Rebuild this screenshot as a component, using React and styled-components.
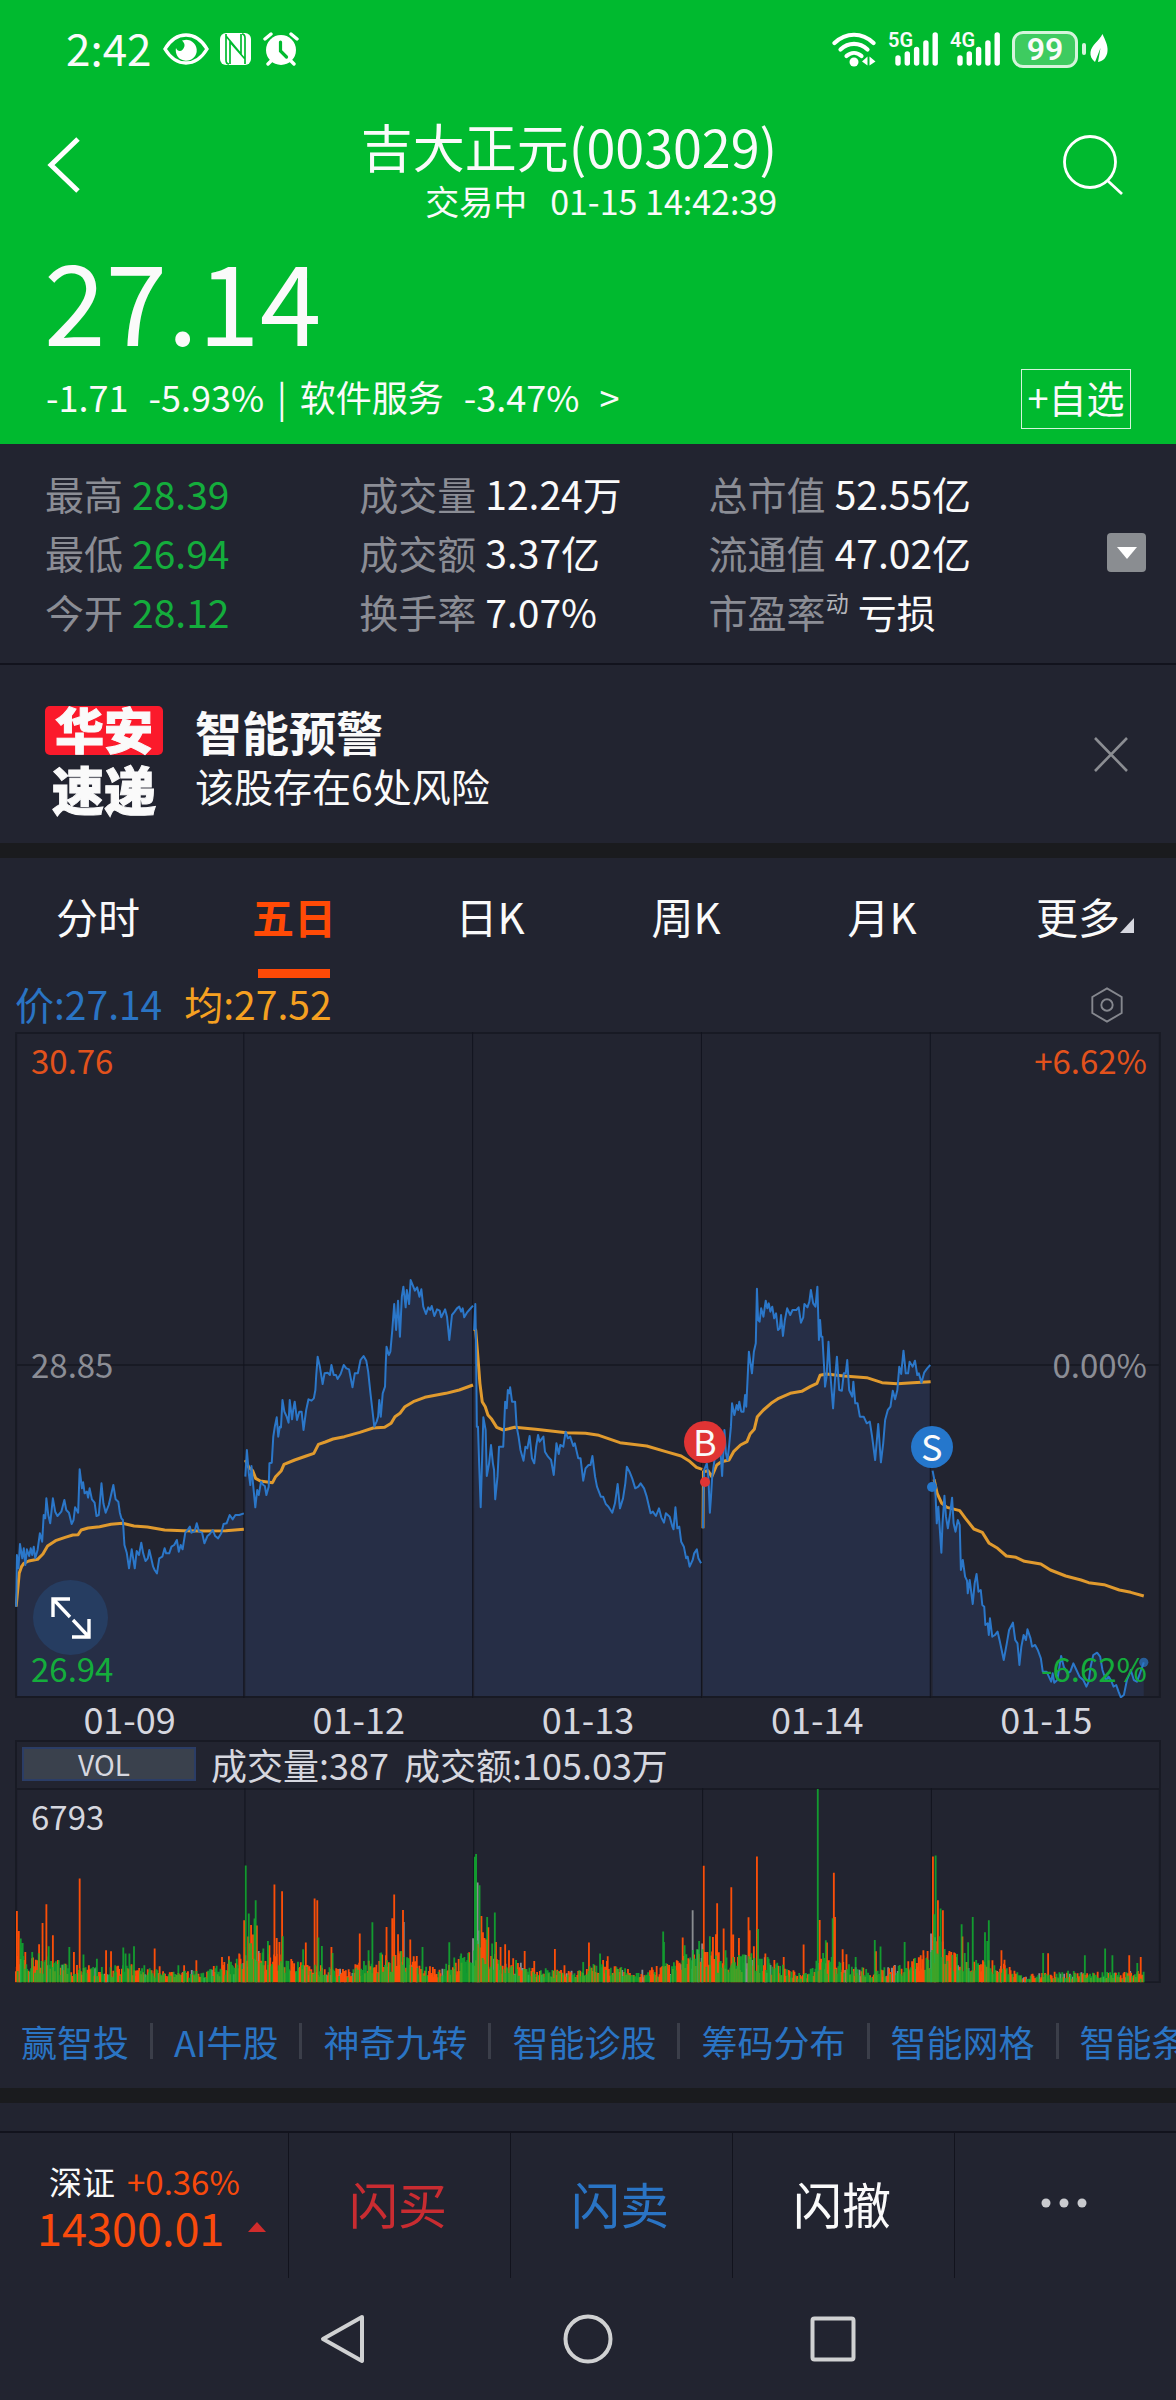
import React from "react";
import styled, { createGlobalStyle } from "styled-components";

const color = {
  green: "#00ba2f",
  panel: "#222430",
  band: "#1a1b1e",
  line: "#12131d",
  grid: "#181a24",
  up: "#f84a0c",
  down: "#14ad3c",
  blue: "#2a74c4",
  orange: "#f5a021",
  muted: "#8b8d95",
  text: "#fafafa",
  soft: "#d6d7df",
};

const GlobalStyle = createGlobalStyle`
  *, *::before, *::after { box-sizing: border-box; }
  body {
    margin: 0;
    background: ${color.panel};
    color: ${color.text};
    font-family: "Noto Sans CJK SC", "Noto Sans", sans-serif;
    font-size: 39px;
  }
  button {
    margin: 0;
    padding: 0;
    border: 0;
    background: none;
    color: inherit;
    font: inherit;
    cursor: pointer;
  }
  a { color: inherit; text-decoration: none; }
  p, h1, h2, dl, dd { margin: 0; font-weight: 400; }
  svg { display: block; }
`;

const Page = styled.div`
  display: flex;
  flex-direction: column;
  overflow: hidden;
`;

/* ---------- header ---------- */

const Hero = styled.header`
  background: ${color.green};
  padding-bottom: 15px;
`;

const StatusBar = styled.div`
  display: flex;
  justify-content: space-between;
  align-items: center;
  height: 98px;
  padding: 0 68px 0 66px;
`;

const StatusGroup = styled.div`
  display: flex;
  align-items: center;
  gap: ${(p) => p.$gap}px;
`;

const Clock = styled.span`
  font-size: 44px;
  line-height: 48px;
  padding-bottom: 4px;
`;

const Signal = styled.span`
  position: relative;
  width: 50px;
`;

const SignalName = styled.span`
  position: absolute;
  left: 0;
  top: -2px;
  font: 600 20px/20px Roboto, sans-serif;
`;

const BatteryWrap = styled.span`
  display: flex;
  align-items: center;
  gap: 4px;
`;

const Battery = styled.span`
  width: 66px;
  height: 37px;
  border: 3px solid #d5f4dc;
  border-radius: 11px;
  background: #3ecb60;
  text-align: center;
  font: 600 32px/31px Roboto, sans-serif;
`;

const BatteryTip = styled.span`
  width: 4px;
  height: 12px;
  border-radius: 2px;
  background: #d5f4dc;
`;

const TitleBar = styled.div`
  display: grid;
  grid-template-columns: 100px 1fr 138px;
  align-items: center;
  padding-top: 12px;
`;

const TitleBlock = styled.div`
  justify-self: center;
  text-align: right;
`;

const Title = styled.h1`
  font-size: 52px;
  line-height: 72px;
`;

const Subtitle = styled.p`
  font-size: 34px;
  line-height: 38px;
  white-space: pre;
`;

const IconButton = styled.button`
  display: flex;
  justify-content: ${(p) => p.$justify || "center"};
  padding: ${(p) => p.$pad || "0"};
`;

const Price = styled.p`
  margin-top: 18px;
  padding-left: 44px;
  font-size: 111px;
  line-height: 120px;
`;

const ChangeRow = styled.div`
  display: flex;
  justify-content: space-between;
  align-items: center;
  margin-top: 11px;
  padding: 0 45px 0 46px;
`;

const Change = styled.p`
  display: flex;
  gap: 20px;
  padding-bottom: 6px;
  font-size: 36px;
  line-height: 52px;
`;

const Pipe = styled.span`
  margin: 0 -7px;
`;

const AddButton = styled.button`
  width: 110px;
  height: 60px;
  border: 1px solid #d5f4dc;
  padding-bottom: 4px;
  font-size: 38px;
  line-height: 54px;
  white-space: nowrap;
`;

/* ---------- key figures ---------- */

const Stats = styled.section`
  display: flex;
  align-items: center;
  padding: 20px 30px 22px 45px;
`;

const StatGrid = styled.dl`
  flex: 1;
  display: grid;
  grid-template-columns: 314fr 349fr 398fr;
`;

const Stat = styled.div`
  display: flex;
  gap: 9px;
  line-height: 59px;
  white-space: nowrap;
`;

const StatName = styled.dt`
  color: ${color.muted};
`;

const StatValue = styled.dd`
  color: ${(p) => (p.$down ? color.down : color.text)};
`;

const Mark = styled.sup`
  font-size: 23px;
  line-height: 23px;
  vertical-align: 16px;
  color: #b4b5ba;
`;

const MoreToggle = styled.button`
  width: 39px;
  height: 39px;
  border-radius: 4px;
  background: #8a8d91;
  display: grid;
  place-items: center;
`;

/* ---------- alert ---------- */

const Alert = styled.section`
  display: flex;
  align-items: center;
  height: 180px;
  border-top: 2px solid ${color.line};
  padding: 8px 48px 0 45px;
`;

const Brand = styled.div`
  width: 118px;
  display: flex;
  flex-direction: column;
  gap: 13px;
  text-align: center;
  font-weight: 900;
  font-size: 52px;
  line-height: 42px;
  -webkit-text-stroke: 1px #fafafa;
`;

const BrandTop = styled.span`
  height: 49px;
  border-radius: 5px;
  background: #fb1a2b;
  font-size: 49px;
  line-height: 43px;
`;

const AlertText = styled.div`
  flex: 1;
  padding-left: 32px;
  line-height: 54px;
`;

const AlertTitle = styled.h2`
  font-size: 47px;
  font-weight: 700;
`;

const Band = styled.div`
  height: 15px;
  background: ${color.band};
`;

/* ---------- tabs ---------- */

const Tabs = styled.nav`
  display: grid;
  grid-template-columns: repeat(6, 1fr);
`;

const Tab = styled.button`
  display: flex;
  flex-direction: column;
  align-items: center;
  height: 120px;
  padding-top: 28px;
  font-size: 42px;
  line-height: 60px;
  font-weight: ${(p) => (p.$active ? 700 : 400)};
  color: ${(p) => (p.$active ? "#ff4a06" : color.text)};

  &::after {
    content: "";
    width: 72px;
    height: 9px;
    margin-top: 23px;
    background: ${(p) => (p.$active ? "#ff4a06" : "transparent")};
  }
`;

const TabLabel = styled.span`
  position: relative;
`;

const Corner = styled.span`
  position: absolute;
  left: 100%;
  bottom: 13px;
`;

/* ---------- charts ---------- */

const Legend = styled.div`
  display: flex;
  align-items: center;
  gap: 22px;
  height: 54px;
  padding: 0 52px 0 15px;
`;

const LegendItem = styled.span`
  color: ${(p) => p.$color};
  line-height: 50px;
  padding-bottom: 4px;
`;

const Push = styled.span`
  flex: 1;
`;

const Charts = styled.section`
  margin: 0 15px;
`;

const Plot = styled.div`
  position: relative;
  height: ${(p) => p.$height}px;

  > svg { width: 100%; height: 100%; }
`;

const AxisLabel = styled.span`
  position: absolute;
  ${(p) => p.$side || "left"}: ${(p) => (p.$side === "right" ? 14 : 16)}px;
  ${(p) => p.$place};
  font-size: 33px;
  line-height: 48px;
  color: ${(p) => p.$color};
`;

const ExpandButton = styled.button`
  position: absolute;
  left: 18px;
  bottom: 43px;
  width: 75px;
  height: 75px;
  border-radius: 50%;
  background: #263d61;
  display: grid;
  place-items: center;
`;

const Pin = styled.span`
  position: absolute;
  left: ${(p) => p.$left};
  top: ${(p) => p.$top}px;
  width: 42px;
  height: 42px;
  margin-left: -21px;
  border-radius: 50%;
  background: ${(p) => p.$color};
  text-align: center;
  font-size: 36px;
  line-height: 38px;

  &::after {
    content: "";
    position: absolute;
    left: 16px;
    top: 56px;
    width: 10px;
    height: 10px;
    border-radius: 50%;
    background: ${(p) => p.$color};
  }
`;

const Dates = styled.div`
  display: grid;
  grid-template-columns: repeat(5, 1fr);
  height: 42px;
  text-align: center;
  font-size: 36px;
  line-height: 40px;
  color: ${color.soft};
`;

const VolumeBar = styled.div`
  display: flex;
  align-items: center;
  gap: 15px;
  height: 48px;
  border: 2px solid ${color.grid};
  border-bottom: 0;
  padding: 0 0 3px 5px;
  font-size: 36px;
  line-height: 40px;
  color: ${color.soft};
`;

const IndicatorButton = styled.button`
  width: 174px;
  height: 34px;
  border: 2px solid #2b3d66;
  background: #3a414d;
  padding-right: 10px;
  font-size: 28px;
  line-height: 28px;
`;

/* ---------- shortcuts and bottom bars ---------- */

const Shortcuts = styled.nav`
  display: flex;
  align-items: center;
  height: 105px;
  padding: 15px 0 0 21px;
  white-space: nowrap;
  overflow: hidden;
`;

const Shortcut = styled.a`
  flex: none;
  display: flex;
  align-items: center;
  font-size: 36px;
  line-height: 54px;
  padding-bottom: 4px;
  color: ${color.blue};

  & + &::before {
    content: "";
    width: 3px;
    height: 36px;
    margin: 0 21px;
    background: #3b3e49;
  }
`;

const TradeBar = styled.footer`
  display: grid;
  grid-template-columns: 288fr 222fr 222fr 222fr 222fr;
  height: 147px;
  margin-top: 28px;
  border-top: 2px solid ${color.line};
`;

const TradeCell = styled.button`
  display: flex;
  align-items: center;
  justify-content: center;
  border-left: 1px solid ${color.line};
  padding: 0 3px 5px 0;
  font-size: 49px;
  line-height: 60px;
  color: ${(p) => p.$color || color.text};
`;

const IndexCell = styled.div`
  padding: 25px 0 0 37px;
  color: ${color.up};
`;

const IndexTop = styled.div`
  display: flex;
  gap: 12px;
  padding-left: 12px;
  font-size: 33px;
  line-height: 46px;
`;

const IndexName = styled.span`
  color: ${color.text};
`;

const IndexValue = styled.div`
  display: flex;
  align-items: center;
  gap: 24px;
  font-size: 45px;
  line-height: 46px;
`;

const SystemNav = styled.nav`
  display: grid;
  grid-template-columns: 1fr 245px 245px 245px 1fr;
  align-items: center;
  height: 122px;

  > :first-child { grid-column: 2; }
`;

/* ---------- chart data ---------- */

const HALF = 1505;

const days = [
  {
    x: 0,
    price:
      "42,1130 44,975 48,1015 52,942 58,985 62,955 66,1005 70,958 76,978 80,955 84,975 88,950 92,985 98,960 104,910 110,935 114,855 118,865 121,805 126,855 131,880 138,805 144,845 150,858 160,845 168,810 173,840 180,848 187,882 192,870 196,832 204,848 208,718 214,775 217,757 221,790 227,785 230,803 234,775 240,808 247,818 252,858 258,855 265,760 270,820 276,848 284,825 290,795 296,765 302,808 309,815 313,848 317,865 321,870 325,945 331,968 337,1015 344,958 352,1015 357,963 363,975 369,938 374,970 380,993 386,985 390,960 395,985 400,1010 404,1020 410,1030 416,985 424,980 430,955 434,970 442,970 448,950 455,945 462,930 467,965 472,945 477,958 484,908 490,900 496,890 500,908 508,905 514,880 520,905 528,908 534,940 542,918 548,912 556,900 562,918 570,925 578,910 584,882 592,880 600,855 608,868 615,855 625,855 637,850",
    average:
      "42,1130 46,1080 50,1030 56,1010 62,1000 75,993 98,988 112,972 124,948 145,932 170,922 190,915 204,914 212,900 230,894 260,890 290,883 320,880 350,888 385,891 430,900 480,902 530,903 590,902 637,898",
  },
  {
    x: 0,
    price:
      "641,740 645,660 650,730 654,765 657,708 661,760 667,832 672,780 676,795 682,755 688,765 692,768 696,795 702,770 704,700 710,698 714,620 718,590 723,562 727,620 731,590 734,592 738,510 743,545 749,560 754,578 757,510 763,568 766,540 770,515 776,570 782,545 788,545 793,600 800,540 806,508 814,512 820,505 824,480 826,440 830,380 836,412 843,462 848,430 856,428 862,435 866,405 872,435 878,435 882,447 890,432 898,405 905,415 912,418 921,472 927,430 935,430 942,390 950,378 957,392 962,425 968,490 973,540 978,590 984,575 988,560 991,510 995,560 1000,490 1006,470 1008,400 1010,350 1016,375 1020,365 1025,300 1030,222 1035,300 1040,212 1045,320 1050,200 1054,170 1060,232 1063,180 1069,222 1073,150 1080,170 1084,182 1090,172 1096,200 1101,178 1106,230 1113,252 1119,232 1124,240 1128,228 1135,258 1142,238 1149,242 1153,262 1163,238 1168,260 1174,330 1181,255 1188,245 1194,235 1200,230 1205,245 1209,235 1213,262 1220,248 1226,240 1236,227",
    average:
      "641,690 650,712 660,722 668,745 680,753 712,758 720,740 735,722 742,703 770,690 800,678 820,670 832,643 850,636 870,627 900,620 940,607 975,594 1005,592 1022,580 1032,560 1045,550 1058,530 1080,515 1110,502 1165,490 1200,480 1236,465",
  },
  {
    x: 0,
    price:
      "1239,300 1242,222 1244,350 1246,590 1249,590 1252,700 1256,832 1263,562 1269,600 1272,738 1278,700 1283,645 1288,700 1291,720 1294,808 1300,740 1304,650 1315,650 1320,515 1324,535 1327,480 1331,490 1333,472 1338,515 1346,515 1350,590 1355,620 1360,660 1368,692 1373,650 1378,655 1384,618 1390,685 1396,700 1401,650 1406,615 1410,635 1420,620 1424,665 1432,680 1440,690 1447,735 1454,640 1460,672 1464,645 1472,650 1478,605 1484,625 1490,620 1498,648 1502,640 1511,685 1517,685 1524,752 1530,715 1538,705 1543,705 1548,678 1555,740 1560,770 1570,800 1576,800 1583,822 1590,830 1600,848 1607,820 1614,762 1620,835 1628,805 1634,760 1638,710 1645,725 1652,745 1660,775 1668,770 1674,760 1683,775 1690,800 1700,850 1706,845 1714,858 1722,835 1728,862 1735,878 1740,850 1750,860 1757,890 1760,898 1765,832 1770,895 1775,890 1780,935 1787,950 1793,985 1797,980 1802,1010 1810,990 1814,970 1821,958 1825,985 1832,1000",
    average:
      "1238,298 1243,300 1248,370 1254,460 1260,515 1268,530 1275,555 1285,568 1298,592 1315,600 1345,592 1400,598 1480,608 1530,610 1565,616 1620,638 1690,648 1740,665 1780,678 1800,692 1820,712 1835,718",
  },
  {
    x: HALF,
    price:
      "332,895 333,790 335,720 342,700 346,740 350,848 353,800 356,740 362,690 376,640 380,700 382,738 388,600 392,670 396,690 400,650 405,590 408,520 414,555 420,525 424,540 427,515 432,545 438,545 442,495 445,530 448,460 452,365 460,430 465,365 470,340 473,176 476,270 480,275 484,235 490,260 496,212 500,235 504,220 508,245 513,230 518,265 523,250 528,300 533,295 536,255 541,318 546,270 552,235 560,255 566,240 576,240 582,232 588,278 594,262 597,222 605,232 610,215 614,180 620,220 626,230 631,170 635,330 638,270 641,320 644,320 648,400 651,470 655,440 660,335 664,420 672,535 677,450 682,380 688,480 695,482 700,430 705,430 709,390 714,480 722,500 725,455 730,520 736,520 742,560 752,560 760,580 768,575 774,620 782,690 790,582 797,697 803,640 808,570 815,540 822,530 828,482 834,508 840,480 845,410 850,432 856,362 862,430 868,430 872,395 880,410 886,392 892,435 896,430 903,458 910,428 918,415 926,405",
    average:
      "332,895 333,725 345,722 355,740 368,705 380,695 400,690 412,665 430,645 447,635 455,612 466,598 474,560 490,540 510,520 530,505 560,490 590,484 612,470 630,460 638,436 655,432 700,438 760,443 800,458 840,461 880,458 927,455",
  },
  {
    x: HALF,
    price:
      "932,722 936,745 940,800 943,880 947,830 955,968 958,880 963,797 967,860 972,895 978,850 983,803 987,880 992,905 998,870 1003,885 1006,1020 1011,990 1017,1040 1022,1052 1024,1090 1029,1050 1037,1122 1042,1060 1047,1032 1052,1085 1058,1080 1062,1125 1067,1130 1070,1185 1076,1180 1079,1215 1082,1165 1088,1220 1095,1215 1102,1205 1108,1235 1118,1290 1126,1240 1132,1200 1142,1178 1148,1230 1154,1240 1159,1305 1164,1250 1170,1215 1176,1230 1180,1198 1188,1225 1192,1250 1200,1245 1207,1260 1215,1285 1220,1325 1230,1325 1236,1340 1242,1355 1246,1330 1250,1358 1258,1350 1268,1278 1275,1310 1284,1330 1292,1325 1300,1300 1308,1320 1316,1340 1326,1350 1334,1370 1340,1355 1345,1310 1352,1275 1362,1268 1370,1280 1376,1320 1385,1350 1392,1340 1398,1350 1405,1370 1412,1365 1418,1385 1424,1402 1432,1395 1440,1350 1450,1320 1458,1350 1466,1355 1474,1330 1484,1297",
    average:
      "936,748 944,790 956,820 970,832 1003,842 1018,865 1040,897 1062,907 1080,940 1102,955 1125,978 1150,982 1172,994 1215,1002 1240,1020 1280,1038 1320,1050 1340,1058 1380,1064 1420,1080 1450,1087 1484,1098",
  },
];

const dayLines = [637, 1235, 1833, 2431];

/* Peaks of traded volume: position, top of the bar, direction. */
const peaksEarly =
  "44,662r 49,722r 54,745g 59,758g 66,785r 84,785g 102,762r 111,698r 121,642r 127,768g 138,735r 168,820g 181,770g 193,785r 208,565r 218,793g 232,825r 253,805g 277,780r 290,783r 322,772g 328,790g 338,790g 350,768g 377,825g 404,775r 417,828r 466,825g 481,825r 513,810r 580,800r 598,798r 625,790r 638,690r 642,526g 650,670g 656,704r 661,733r 665,685g 668,630g 671,706r 700,752g 704,765r 717,583r 723,743r 730,755r 737,603r 739,738g 688,775g 792,777g 799,757r 822,625r 829,630r 832,742g 841,767g 866,770r 869,788g 940,730r 963,780g 973,696g 1010,710r 1025,684r 1030,613r 1040,732r 1053,659r 1055,695n 1072,748r 1104,770g 1089,797r 1174,756g 1187,802g 1205,790g 1236,744n 1241,500g 1244,492g 1248,577n 1253,585g 1258,677r 1262,726r 1273,680g 1276,711r 1293,667g 1296,755r 1308,770r 1320,762r 1330,780r 1371,782r 1396,812r 1450,776r 1475,825r 1524,815g 1539,757r";
const peaksLate =
  "63,790g 83,798r 228,724g 230,755g 279,742r 284,765g 305,660n 322,752g 334,527r 330,760n 350,738g 358,740r 366,732r 369,639r 386,715r 391,780g 406,591r 411,733r 426,743r 451,681r 454,720r 473,499r 476,716g 465,768r 495,790r 543,800r 595,763r 632,297g 637,689r 653,750g 656,757r 671,684g 674,548r 677,680r 697,777r 707,792r 731,800g 781,749g 784,783r 796,769g 859,755g 908,780r 919,782r 928,730n 933,499r 940,496g 946,630r 953,655g 959,660r 936,672g 950,738g 975,788r 1008,702g 1010,739r 1016,788g 1025,756g 1037,680g 1069,726g 1075,752g 1079,690g 1112,780r 1120,808r 1221,788g 1234,789r 1330,795g 1383,775g 1402,795g 1446,795r 1467,818g 1476,800r";

const parsePeaks = (text, offset) =>
  text.split(" ").map((item) => {
    const [x, rest] = item.split(",");
    return { x: Number(x) + offset, y: parseInt(rest, 10), kind: rest.slice(-1) };
  });

/* Usual activity through the session: position, typical bar height. */
const activity = [
  [40, 95], [150, 60], [230, 40], [340, 48], [440, 28], [540, 35], [630, 75],
  [650, 130], [700, 85], [800, 50], [900, 35], [1000, 80], [1060, 85], [1140, 35],
  [1225, 80], [1250, 140], [1310, 75], [1400, 42], [1500, 30], [1580, 60], [1660, 28],
  [1740, 50], [1830, 95], [1900, 75], [1980, 80], [2030, 55], [2100, 20], [2150, 80],
  [2210, 50], [2300, 38], [2420, 75], [2440, 130], [2520, 65], [2620, 55], [2670, 20],
  [2760, 32], [2850, 28], [2990, 30],
];

const levelAt = (x) => {
  const i = activity.findIndex(([ax]) => ax > x);
  if (i <= 0) return activity[i === 0 ? 0 : activity.length - 1][1];
  const [x0, a] = activity[i - 1];
  const [x1, b] = activity[i];
  return a + ((b - a) * (x - x0)) / (x1 - x0);
};

const buildVolume = () => {
  let seed = 77;
  const random = () => {
    seed = (seed * 16807) % 2147483647;
    return seed / 2147483647;
  };
  const bars = [];
  for (let x = 41; x < 2990; x += 2.5) {
    const level = levelAt(x);
    const r = random();
    const k = random();
    bars.push({
      x,
      y: 876 - level * (0.35 + 0.8 * r),
      kind: k < 0.46 ? "r" : k < 0.92 ? "g" : "n",
    });
  }
  return bars.concat(parsePeaks(peaksEarly, 0), parsePeaks(peaksLate, HALF));
};

const volume = buildVolume();
const barColor = { r: "#fb4e08", g: "#0fb92f", n: "#8a8d91" };
const barPath = (kind) =>
  volume
    .filter((bar) => bar.kind === kind)
    .map((bar) => `M${bar.x - 2.4} 876V${Math.round(bar.y)}h4.8V876z`)
    .join("");

const PriceChart = () => (
  <svg viewBox="39 -594 2995 1998" preserveAspectRatio="none" role="img" aria-label="五日走势">
    {days.map((day, i) => {
      const points = day.price.split(" ");
      const first = points[0].split(",")[0];
      const last = points[points.length - 1].split(",")[0];
      return (
        <polygon
          key={i}
          transform={`translate(${day.x} 0)`}
          points={`${first},1402 ${day.price} ${last},1402`}
          fill="#262e46"
        />
      );
    })}
    <g stroke={color.grid} strokeWidth="2" fill="none">
      <path vectorEffect="non-scaling-stroke" d="M39 405H3034M42 -591H3031V1401H42z" />
      {dayLines.map((x) => (
        <path key={x} vectorEffect="non-scaling-stroke" d={`M${x} -594V1404`} strokeWidth="1" stroke="#12141e" />
      ))}
    </g>
    {days.map((day, i) => (
      <g key={i} transform={`translate(${day.x} 0)`} fill="none" strokeLinejoin="round">
        <polyline vectorEffect="non-scaling-stroke" points={day.average} stroke="#e09a2e" strokeWidth="3" />
        <polyline vectorEffect="non-scaling-stroke" points={day.price} stroke="#2b77c9" strokeWidth="2" />
      </g>
    ))}
    <ellipse cx="2989" cy="1297" rx="12" ry="14" fill="#2b77c9" opacity="0.7" />
  </svg>
);

const VolumeChart = () => (
  <svg viewBox="39 294 2995 584" preserveAspectRatio="none" role="img" aria-label="成交量">
    <path
      d="M42 297H3031V876H42z"
      fill="none"
      stroke={color.grid}
      strokeWidth="2"
      vectorEffect="non-scaling-stroke"
    />
    {dayLines.map((x) => (
      <path key={x} vectorEffect="non-scaling-stroke" d={`M${x + 3} 294V876`} stroke="#12141e" />
    ))}
    <path d={barPath("n")} fill={barColor.n} />
    <path d={barPath("r")} fill={barColor.r} />
    <path d={barPath("g")} fill={barColor.g} opacity="0.8" />
  </svg>
);

/* ---------- icons ---------- */

const EyeIcon = () => (
  <svg width="46" height="32" viewBox="0 0 46 32">
    <path d="M2 16C8 6 15 2 23 2s15 4 21 14C38 26 31 30 23 30S8 26 2 16z" fill="none" stroke="#fff" strokeWidth="3.4" />
    <path d="M20.500 7.200A10.500 10.500 0 1 1 13 15c1 3 4.500 4 6.500 1.800 2.600-2.800 3-6-.500-9.200z" fill="#fff" />
  </svg>
);

const NfcIcon = () => (
  <svg width="32" height="32" viewBox="0 0 32 32">
    <rect x="0" y="0" width="31" height="32" rx="6" fill="#fff" />
    <path d="M6 1v26c0 2 1 4 3 4M25 31V5c0-2-1-4-3-4M10 31V9l15 17M6 3l15 18V1" fill="none" stroke={color.green} strokeWidth="1.700" />
  </svg>
);

const AlarmIcon = () => (
  <svg width="36" height="34" viewBox="0 0 36 34">
    <circle cx="18" cy="18" r="15" fill="#fff" />
    <path d="M2 7l6-5M34 7l-6-5M5 32l5-5M31 32l-5-5" stroke="#fff" strokeWidth="3.400" strokeLinecap="round" />
    <path d="M17.500 10v9l6 6" fill="none" stroke={color.green} strokeWidth="3.200" strokeLinecap="round" />
  </svg>
);

const WifiIcon = () => (
  <svg width="44" height="36" viewBox="0 0 44 36">
    <g fill="none" stroke="#fff" strokeWidth="4.200" strokeLinecap="round">
      <path d="M2.500 12C14 1 30 1 41.500 12" />
      <path d="M8.500 18.500c8-7.500 19-7.500 27 0" />
      <path d="M14.500 25c4.500-4 10.500-4 15 0" />
    </g>
    <circle cx="22" cy="31" r="4.500" fill="#fff" />
    <path d="M35.500 25.500v9l-5.500-4zM37.500 25.500l6 5-6 4z" fill="#fff" />
  </svg>
);

const SignalIcon = () => (
  <svg width="50" height="34" viewBox="0 0 50 34">
    <path
      d="M10 26v5M19.300 22v9M28.600 17.500v13.500M37.900 11v20M47.200 3v28"
      stroke="#fff"
      strokeWidth="5.400"
      strokeLinecap="round"
    />
  </svg>
);

const LeafIcon = () => (
  <svg width="18" height="30" viewBox="0 0 18 30">
    <path d="M12.500 0C15 6 18 11 17.500 17c-.4 6-4 10-9.500 11l2.500-14L5 28C1.500 25 0 22 .5 18 1.500 11 9 7 12.500 0z" fill="#fff" />
  </svg>
);

const BackIcon = () => (
  <svg width="34" height="58" viewBox="0 0 34 58">
    <path d="M32 3L5 29l27 26" fill="none" stroke="#fff" strokeWidth="5" />
  </svg>
);

const SearchIcon = () => (
  <svg width="60" height="62" viewBox="0 0 60 62">
    <circle cx="27" cy="28" r="25.500" fill="none" stroke="#fff" strokeWidth="2.800" />
    <path d="M45 47l14 13" stroke="#fff" strokeWidth="2.800" />
  </svg>
);

const CloseIcon = () => (
  <svg width="34" height="35" viewBox="0 0 34 35">
    <path d="M1 1l32 33M33 1L1 34" stroke="#8b8d92" strokeWidth="2.600" />
  </svg>
);

const SettingIcon = () => (
  <svg width="34" height="36" viewBox="0 0 34 38">
    <path d="M17 1.500l15.500 9v17L17 36.500 1.500 27.500v-17z" fill="none" stroke="#85878e" strokeWidth="2" />
    <circle cx="17" cy="19" r="6" fill="none" stroke="#85878e" strokeWidth="2" />
  </svg>
);

const ExpandIcon = () => (
  <svg width="40" height="42" viewBox="0 0 40 42">
    <path d="M2 20V2h17M3 3l16 17M38 22v18H21M37 39L22 23" fill="none" stroke="#fff" strokeWidth="3.400" />
  </svg>
);

const Triangle = ({ width, height, points, fill }) => (
  <svg width={width} height={height} viewBox={`0 0 ${width} ${height}`}>
    <polygon points={points} fill={fill} />
  </svg>
);

/* ---------- content ---------- */

const stats = [
  ["最高", "28.39", true],
  ["成交量", "12.24万"],
  ["总市值", "52.55亿"],
  ["最低", "26.94", true],
  ["成交额", "3.37亿"],
  ["流通值", "47.02亿"],
  ["今开", "28.12", true],
  ["换手率", "7.07%"],
  ["市盈率", "亏损", false, "动"],
];
const tabs = ["分时", "五日", "日K", "周K", "月K", "更多"];
const dates = ["01-09", "01-12", "01-13", "01-14", "01-15"];
const shortcuts = ["赢智投", "AI牛股", "神奇九转", "智能诊股", "筹码分布", "智能网格", "智能条件单"];

export default function App() {
  return (
    <Page>
      <GlobalStyle />
      <Hero>
        <StatusBar>
          <StatusGroup $gap={11}>
            <Clock>2:42</Clock>
            <EyeIcon />
            <NfcIcon />
            <AlarmIcon />
          </StatusGroup>
          <StatusGroup $gap={12}>
            <WifiIcon />
            <Signal>
              <SignalName>5G</SignalName>
              <SignalIcon />
            </Signal>
            <Signal>
              <SignalName>4G</SignalName>
              <SignalIcon />
            </Signal>
            <BatteryWrap>
              <Battery>99</Battery>
              <BatteryTip />
              <LeafIcon />
            </BatteryWrap>
          </StatusGroup>
        </StatusBar>
        <TitleBar>
          <IconButton $justify="flex-start" $pad="0 0 0 46px" aria-label="返回">
            <BackIcon />
          </IconButton>
          <TitleBlock>
            <Title>吉大正元(003029)</Title>
            <Subtitle>{"交易中   01-15 14:42:39"}</Subtitle>
          </TitleBlock>
          <IconButton $justify="flex-end" $pad="0 53px 0 0" aria-label="搜索">
            <SearchIcon />
          </IconButton>
        </TitleBar>
        <Price>27.14</Price>
        <ChangeRow>
          <Change>
            <span>-1.71</span>
            <span>-5.93%</span>
            <Pipe>|</Pipe>
            <span>软件服务</span>
            <span>-3.47%</span>
            <span>&gt;</span>
          </Change>
          <AddButton>+自选</AddButton>
        </ChangeRow>
      </Hero>

      <Stats>
        <StatGrid>
          {stats.map(([name, value, down, mark]) => (
            <Stat key={name}>
              <StatName>
                {name}
                {mark && <Mark>{mark}</Mark>}
              </StatName>
              <StatValue $down={down}>{value}</StatValue>
            </Stat>
          ))}
        </StatGrid>
        <MoreToggle aria-label="展开">
          <Triangle width={20} height={12} points="0,0 20,0 10,12" fill="#fff" />
        </MoreToggle>
      </Stats>

      <Alert>
        <Brand>
          <BrandTop>华安</BrandTop>
          <span>速递</span>
        </Brand>
        <AlertText>
          <AlertTitle>智能预警</AlertTitle>
          <p>该股存在6处风险</p>
        </AlertText>
        <IconButton $pad="0 0 8px" aria-label="关闭">
          <CloseIcon />
        </IconButton>
      </Alert>
      <Band />

      <Tabs>
        {tabs.map((name) => (
          <Tab key={name} $active={name === "五日"}>
            <TabLabel>
              {name}
              {name === "更多" && (
                <Corner>
                  <Triangle width={14} height={15} points="14,0 14,15 0,15" fill={color.soft} />
                </Corner>
              )}
            </TabLabel>
          </Tab>
        ))}
      </Tabs>

      <Legend>
        <LegendItem $color={color.blue}>价:27.14</LegendItem>
        <LegendItem $color={color.orange}>均:27.52</LegendItem>
        <Push />
        <IconButton aria-label="设置">
          <SettingIcon />
        </IconButton>
      </Legend>

      <Charts>
        <Plot $height={666}>
          <PriceChart />
          <AxisLabel $place="top: 4px" $color="#e2521c">30.76</AxisLabel>
          <AxisLabel $place="top: 308px" $color={color.muted}>28.85</AxisLabel>
          <AxisLabel $place="bottom: 6px" $color={color.down}>26.94</AxisLabel>
          <AxisLabel $side="right" $place="top: 4px" $color="#e2521c">+6.62%</AxisLabel>
          <AxisLabel $side="right" $place="top: 308px" $color={color.muted}>0.00%</AxisLabel>
          <AxisLabel $side="right" $place="bottom: 6px" $color={color.down}>-6.62%</AxisLabel>
          <Pin $left="60.2%" $top={389} $color="#e03434">B</Pin>
          <Pin $left="80%" $top={394} $color="#2577cc">S</Pin>
          <ExpandButton aria-label="全屏">
            <ExpandIcon />
          </ExpandButton>
        </Plot>
        <Dates>
          {dates.map((date) => (
            <span key={date}>{date}</span>
          ))}
        </Dates>
        <VolumeBar>
          <IndicatorButton>VOL</IndicatorButton>
          <span>成交量:387</span>
          <span>成交额:105.03万</span>
        </VolumeBar>
        <Plot $height={195}>
          <VolumeChart />
          <AxisLabel $place="top: 4px" $color={color.soft}>6793</AxisLabel>
        </Plot>
      </Charts>

      <Shortcuts>
        {shortcuts.map((name) => (
          <Shortcut key={name} href="#">
            {name}
          </Shortcut>
        ))}
      </Shortcuts>
      <Band />

      <TradeBar>
        <IndexCell>
          <IndexTop>
            <IndexName>深证</IndexName>
            <span>+0.36%</span>
          </IndexTop>
          <IndexValue>
            14300.01
            <Triangle width={18} height={10} points="9,0 18,10 0,10" fill="#d02c2c" />
          </IndexValue>
        </IndexCell>
        <TradeCell $color="#c92c31">闪买</TradeCell>
        <TradeCell $color={color.blue}>闪卖</TradeCell>
        <TradeCell>闪撤</TradeCell>
        <TradeCell aria-label="更多操作">
          <svg width="46" height="10" viewBox="0 0 46 10">
            <g fill="#c9cace">
              <circle cx="5" cy="5" r="4.500" />
              <circle cx="23" cy="5" r="4.500" />
              <circle cx="41" cy="5" r="4.500" />
            </g>
          </svg>
        </TradeCell>
      </TradeBar>

      <SystemNav>
        <IconButton aria-label="后退">
          <svg width="48" height="50" viewBox="0 0 48 50">
            <path d="M43 3L4 25l39 22z" fill="none" stroke="#d0d1d2" strokeWidth="4" strokeLinejoin="round" />
          </svg>
        </IconButton>
        <IconButton aria-label="主页">
          <svg width="50" height="50" viewBox="0 0 50 50">
            <circle cx="25" cy="25" r="22.500" fill="none" stroke="#d0d1d2" strokeWidth="4" />
          </svg>
        </IconButton>
        <IconButton aria-label="最近任务">
          <svg width="46" height="46" viewBox="0 0 46 46">
            <rect x="2.500" y="2.500" width="41" height="41" rx="2" fill="none" stroke="#d0d1d2" strokeWidth="4" />
          </svg>
        </IconButton>
      </SystemNav>
    </Page>
  );
}
